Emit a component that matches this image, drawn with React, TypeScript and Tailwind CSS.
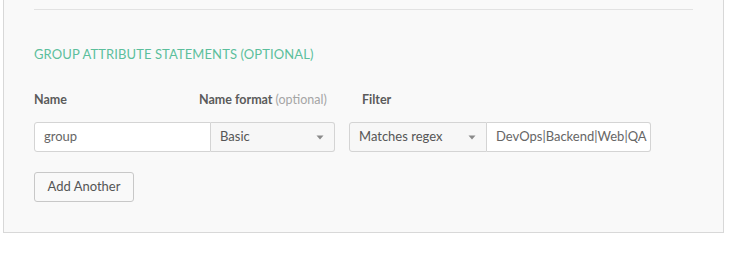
import React from "react";

const Arrow = () => (
  <svg width="8" height="5" viewBox="0 0 8 5" className="shrink-0">
    <path d="M0.5 0.5 L7.5 0.5 L4 4.5 Z" fill="#8a8a8a" />
  </svg>
);

export default function App() {
  return (
    <div className="w-[732px] h-[256px] bg-white" style={{ fontFamily: "Lato, 'Open Sans', sans-serif" }}>
      <div className="ml-[3px] w-[721px] bg-[#f9f9f9] border-l border-r border-b border-[#d8d8d8] px-[30px] pt-[9px] pb-[30px]">
        <div className="border-t border-[#e2e2e2] mr-[0px]" />
        <div className="mt-[36px] h-[16px] leading-[16px] text-[13px] text-[#5cbf9c] tracking-[0.1px]">
          GROUP ATTRIBUTE STATEMENTS (OPTIONAL)
        </div>
        <div className="mt-[30px] flex h-[16px] leading-[16px] text-[12.5px] font-bold text-[#5b5b5b]">
          <div className="w-[165px]">Name</div>
          <div className="w-[163px]">
            Name format <span className="font-normal text-[#a5a5a5]">(optional)</span>
          </div>
          <div>Filter</div>
        </div>
        <div className="mt-[14px] flex h-[30px] text-[13px]">
          <div className="w-[177px] h-full bg-white border border-[#d4d4d4] rounded-l-[3px] flex items-center pl-[9px] text-[#666]">
            group
          </div>
          <div className="w-[124px] h-full bg-[#f7f7f7] border border-l-0 border-[#d4d4d4] rounded-r-[3px] flex items-center justify-between pl-[9px] pr-[10px] text-[#555]">
            <span>Basic</span>
            <Arrow />
          </div>
          <div className="ml-[14px] w-[138px] h-full bg-[#f7f7f7] border border-[#d4d4d4] rounded-l-[3px] flex items-center justify-between pl-[9px] pr-[10px] text-[#555]">
            <span>Matches regex</span>
            <Arrow />
          </div>
          <div className="w-[164px] h-full bg-white border border-l-0 border-[#d4d4d4] rounded-r-[3px] flex items-center pl-[9px] text-[#666] overflow-hidden whitespace-nowrap">
            DevOps|Backend|Web|QA
          </div>
        </div>
        <div className="mt-[20px] w-[100px] h-[30px] bg-[#f9f9f9] border border-[#c8c8c8] rounded-[3px] flex items-center justify-center text-[13px] text-[#555]">
          Add Another
        </div>
      </div>
    </div>
  );
}
